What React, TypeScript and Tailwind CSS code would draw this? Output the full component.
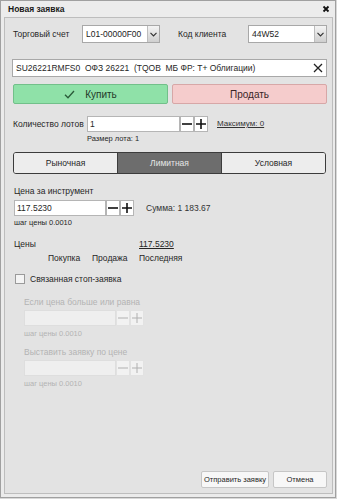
import React from 'react';

const font = { fontFamily: '"Liberation Sans", Arial, sans-serif' };

const Stepper = ({ disabled }: { disabled?: boolean }) => (
  <div className="flex">
    {['minus', 'plus'].map((k) => (
      <div
        key={k}
        className={`w-[14px] h-[16px] flex items-center justify-center border ${
          disabled ? 'bg-[#f2f2f2] border-[#e2e2e2]' : 'bg-white border-[#b5b5b5]'
        }`}
      >
        <svg width="10" height="10" viewBox="0 0 10 10">
          <path
            d={k === 'minus' ? 'M0 5h10' : 'M0 5h10M5 0v10'}
            stroke={disabled ? '#b0b0b0' : '#111'}
            strokeWidth={disabled ? 1 : 1.6}
          />
        </svg>
      </div>
    ))}
  </div>
);

const Select = ({ value, width }: { value: string; width: string }) => (
  <div className={`${width} h-[18px] flex border border-[#a8a8a8] bg-white`}>
    <div className="flex-1 px-[3px] flex items-center text-[8.5px] text-[#222]">{value}</div>
    <div className="w-[12px] flex items-center justify-center bg-gradient-to-b from-[#f4f4f4] to-[#cfcfcf] border-l border-[#bdbdbd]">
      <svg width="7" height="5" viewBox="0 0 7 5">
        <path d="M0.5 0.8L3.5 3.8L6.5 0.8" fill="none" stroke="#333" strokeWidth="1.2" />
      </svg>
    </div>
  </div>
);

const StopBlock = ({ label }: { label: string }) => (
  <div className="flex flex-col text-[#b3b3b3]">
    <div className="text-[8.5px] leading-[11px] mb-[2px]">{label}</div>
    <div className="flex">
      <div className="w-[92px] h-[16px] bg-[#efefef] border border-[#dedede]" />
      <Stepper disabled />
    </div>
    <div className="text-[7.5px] leading-[10px] mt-[3px]">шаг цены 0.0010</div>
  </div>
);

export default function App() {
  return (
    <div className="w-[337px] h-[499px] bg-[#d8d8d8] overflow-hidden whitespace-nowrap" style={font}>
      <div className="w-[336px] h-[498px] bg-[#ebebeb] border border-[#a0a0a0] flex flex-col">
        <div className="h-[16px] flex items-center justify-between pl-[7px] pr-[5px] bg-[#ececec]">
          <span className="text-[8.5px] font-bold text-[#1a1a1a]">Новая заявка</span>
          <svg width="8" height="8" viewBox="0 0 8 8">
            <path d="M1.5 1.5L6.5 6.5M6.5 1.5L1.5 6.5" stroke="#111" strokeWidth="1.8" />
          </svg>
        </div>
        <div className="flex-1 ml-[3px] mr-[2px] mb-[3px] bg-[#e3e3e3] border border-[#bdbdbd] flex flex-col pl-[7px] pr-[5px] pt-[7px] pb-[5px] text-[#262626]">
          <div className="flex items-center">
            <span className="text-[8.5px] w-[70px] pl-[1px]">Торговый счет</span>
            <Select value="L01-00000F00" width="w-[78px]" />
            <span className="text-[8.5px] ml-[18px] w-[70px]">Код клиента</span>
            <Select value="44W52" width="w-[79px]" />
          </div>

          <div className="mt-[16px] h-[18px] flex items-center bg-white border border-[#a8a8a8] pl-[3px] pr-[3px]">
            <span className="flex-1 text-[8.5px] whitespace-pre">SU26221RMFS0  ОФЗ 26221  (TQOB  МБ ФР: Т+ Облигации)</span>
            <svg width="10" height="10" viewBox="0 0 10 10">
              <path d="M1 1L9 9M9 1L1 9" stroke="#222" strokeWidth="1.3" />
            </svg>
          </div>

          <div className="mt-[7px] flex gap-[4px] h-[20px] pl-[1px]">
            <div className="flex-1 flex items-center justify-center gap-[10px] bg-[#8fe1a8] border border-[#72c08a] rounded-[2px]">
              <svg width="11" height="9" viewBox="0 0 11 9">
                <path d="M1 4.8L4 7.8L10 1" fill="none" stroke="#2a5a38" strokeWidth="1.3" />
              </svg>
              <span className="text-[10px] text-[#1f3a28]">Купить</span>
            </div>
            <div className="flex-1 flex items-center justify-center bg-[#f5cccc] border border-[#d7a7a7] rounded-[2px]">
              <span className="text-[10px] text-[#3a2626]">Продать</span>
            </div>
          </div>

          <div className="mt-[12px] flex items-center">
            <span className="text-[8.5px] w-[75px] pl-[1px]">Количество лотов</span>
            <div className="w-[93px] h-[16px] bg-white border border-[#b5b5b5] px-[2px] flex items-center text-[8.5px]">1</div>
            <Stepper />
            <span className="ml-[9px] text-[8px] underline text-[#333]">Максимум: 0</span>
          </div>
          <div className="ml-[75px] mt-[2px] text-[7.5px] leading-[10px]">Размер лота: 1</div>

          <div className="mt-[8px] mx-[1px] flex h-[22px] border border-[#3c3c3c] rounded-[3px] overflow-hidden">
            <div className="flex-1 flex items-center justify-center bg-[#ededed] text-[8.5px]">Рыночная</div>
            <div className="flex-1 flex items-center justify-center bg-[#6d6d6d] text-[8.5px] text-[#e6e6e6] border-x border-[#3c3c3c]">
              Лимитная
            </div>
            <div className="flex-1 flex items-center justify-center bg-[#ededed] text-[8.5px]">Условная</div>
          </div>

          <div className="mt-[12px] pl-[2px] text-[8.5px] leading-[11px]">Цена за инструмент</div>
          <div className="mt-[3px] flex items-center pl-[2px]">
            <div className="w-[92px] h-[16px] bg-white border border-[#b5b5b5] px-[2px] flex items-center text-[8.5px]">117.5230</div>
            <Stepper />
            <span className="ml-[12px] text-[8.5px] text-[#333]">Сумма: 1 183.67</span>
          </div>
          <div className="mt-[2px] pl-[2px] text-[7.5px] leading-[10px]">шаг цены 0.0010</div>

          <div className="mt-[11px] flex text-[8.5px] leading-[11px] pl-[2px]">
            <div className="w-[125px]">Цены</div>
            <div className="underline">117.5230</div>
          </div>
          <div className="mt-[3px] flex text-[8.5px] leading-[11px] pl-[36px]">
            <span className="w-[44px]">Покупка</span>
            <span className="w-[47px]">Продажа</span>
            <span>Последняя</span>
          </div>

          <div className="mt-[9px] flex items-center gap-[5px] pl-[3px]">
            <div className="w-[10px] h-[10px] bg-[#f4f4f4] border border-[#9a9a9a]" />
            <span className="text-[8.5px]">Связанная стоп-заявка</span>
          </div>

          <div className="mt-[11px] pl-[12px] flex flex-col gap-[8px]">
            <StopBlock label="Если цена больше или равна" />
            <StopBlock label="Выставить заявку по цене" />
          </div>

          <div className="mt-auto flex justify-end gap-[4px]">
            <div className="w-[68px] h-[17px] flex items-center justify-center bg-[#f7f7f7] border border-[#c6c6c6] rounded-[2px] text-[7.5px]">
              Отправить заявку
            </div>
            <div className="w-[54px] h-[17px] flex items-center justify-center bg-[#f7f7f7] border border-[#c6c6c6] rounded-[2px] text-[7.5px]">
              Отмена
            </div>
          </div>
        </div>
      </div>
    </div>
  );
}
